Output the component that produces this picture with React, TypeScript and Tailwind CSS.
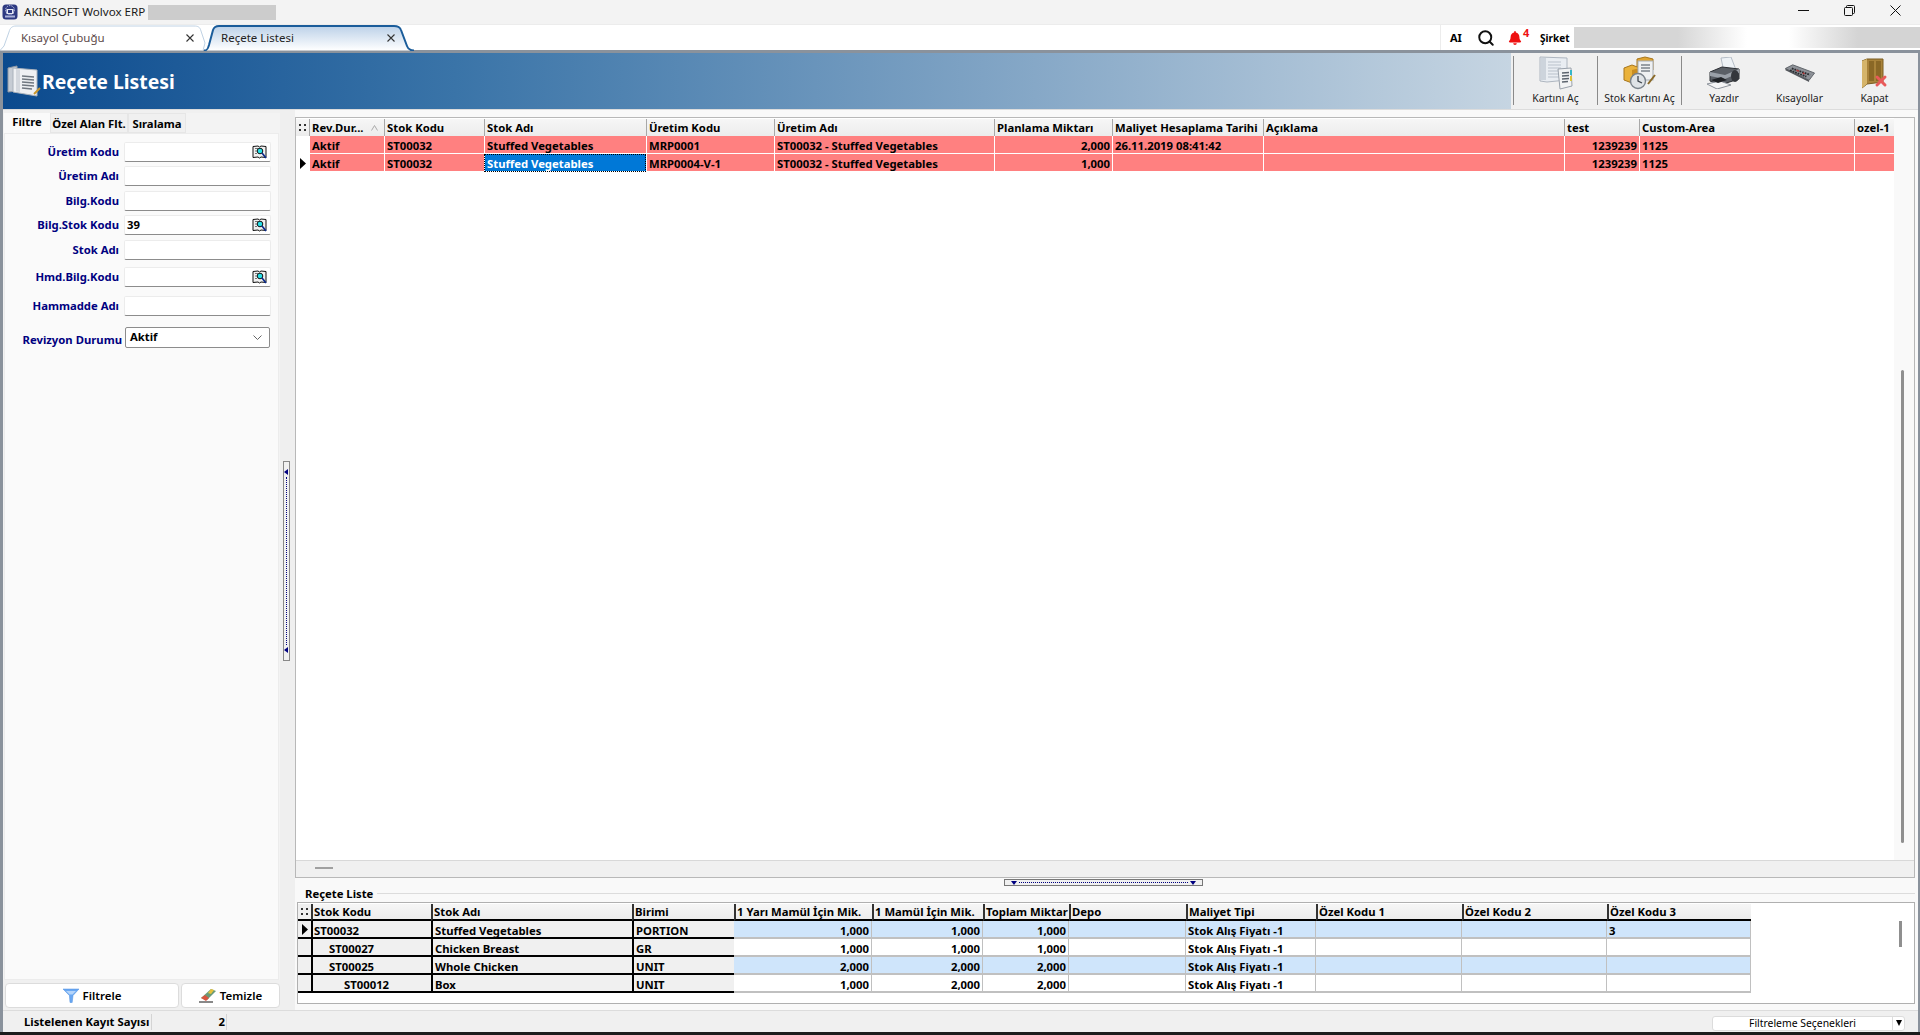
import React from "react";
import { Search } from "lucide-react";
import { FaBell } from "react-icons/fa";

const FONT = "font-['Noto_Sans','Liberation_Sans',sans-serif]";

function BookLens() {
  return (
    <svg width="15" height="14" viewBox="0 0 15 14" className="shrink-0">
      <path d="M1 1.5 L6 1 L7.5 2 L9 1 L14 1.5 L14 12.5 L9 12 L7.5 13 L6 12 L1 12.5Z" fill="#f0f0f0" stroke="#111" strokeWidth="1" />
      <path d="M3 3.5 H6 M3 6 H5 M3 8.5 H5" stroke="#555" strokeWidth="0.8" />
      <circle cx="8" cy="6" r="2.8" fill="#25e0e8" stroke="#111" strokeWidth="1" />
      <line x1="10" y1="8" x2="14" y2="13" stroke="#0a2a8a" strokeWidth="1.7" />
    </svg>
  );
}

function AppIcon() {
  return (
    <svg width="16" height="16" viewBox="0 0 16 16">
      <rect x="0.5" y="0.5" width="15" height="15" rx="3.5" fill="#2e3a82" />
      <circle cx="8" cy="6" r="4.4" fill="none" stroke="#c4cbe8" strokeWidth="1" strokeDasharray="1.4 1" />
      <rect x="4.5" y="5" width="7" height="5" fill="#e6e9f6" />
      <rect x="6" y="6" width="4" height="3" fill="#2e3a82" />
      <rect x="3" y="11.5" width="10" height="2" fill="#aab2da" />
    </svg>
  );
}

function HeaderIcon() {
  return (
    <svg width="34" height="32" viewBox="0 0 34 32">
      <path d="M1 3 L10 1 L10 26 L1 27Z" fill="#c6ccd4" stroke="#8f99a6" />
      <path d="M6 3 L30 5 L30 31 L6 27Z" fill="#eef0f3" stroke="#aab2bc" />
      <path d="M9 4 L13 4.5 L13 27 L9 26.5Z" fill="#d4d8de" />
      <g stroke="#6f7780" strokeWidth="1.6">
        <line x1="15" y1="11" x2="27" y2="12" />
        <line x1="15" y1="14" x2="27" y2="15" />
        <line x1="15" y1="17" x2="27" y2="18" />
        <line x1="15" y1="20" x2="27" y2="21" />
        <line x1="15" y1="23" x2="25" y2="24" />
      </g>
      <line x1="27" y1="29" x2="33" y2="23" stroke="#c7952c" strokeWidth="2" />
    </svg>
  );
}

function CardIcon() {
  return (
    <svg width="34" height="34" viewBox="0 0 34 34">
      <path d="M1 1 L28 2 L28 24 L8 26 L1 25Z" fill="#e9edf2" stroke="#aeb6c0" />
      <rect x="2" y="2" width="5" height="22" fill="#cdd4dc" />
      <g stroke="#b9c1cb">
        <line x1="9" y1="6" x2="22" y2="6" />
        <line x1="9" y1="9" x2="22" y2="9" />
        <line x1="9" y1="12" x2="22" y2="12" />
        <line x1="9" y1="15" x2="22" y2="15" />
        <line x1="9" y1="18" x2="22" y2="18" />
        <line x1="9" y1="21" x2="22" y2="21" />
      </g>
      <path d="M19 13 L32 12 L33 30 L21 33Z" fill="#f2f3f4" stroke="#9aa2ac" />
      <g stroke="#5c646e" strokeWidth="1.3">
        <line x1="23" y1="17" x2="30" y2="16.5" />
        <line x1="23" y1="20" x2="30" y2="19.5" />
        <line x1="23" y1="23" x2="30" y2="22.5" />
        <line x1="23" y1="26" x2="29" y2="25.5" />
      </g>
      <rect x="31" y="14" width="2" height="5" fill="#34b6c8" />
      <rect x="31" y="20" width="2" height="5" fill="#d9c23b" />
    </svg>
  );
}

function StockIcon() {
  return (
    <svg width="34" height="34" viewBox="0 0 34 34">
      <path d="M14 3 L22 1 L30 3 L30 14 L22 16 L14 14Z" fill="#e0a532" stroke="#a8761c" />
      <path d="M1 12 L9 9 L17 12 L17 24 L9 27 L1 24Z" fill="#eab23b" stroke="#a8761c" />
      <path d="M9 14 L17 12 L17 24 L9 27Z" fill="#c98d22" />
      <rect x="15" y="5" width="15" height="19" fill="#eef0f2" stroke="#a6adb5" />
      <g stroke="#6a727b" strokeWidth="1.3">
        <line x1="18" y1="9" x2="27" y2="9" />
        <line x1="18" y1="12" x2="27" y2="12" />
        <line x1="18" y1="15" x2="27" y2="15" />
      </g>
      <circle cx="15" cy="25" r="7.5" fill="#dfe3e7" stroke="#7a828b" strokeWidth="1.4" />
      <path d="M15 20 L15 25 L19 27" fill="none" stroke="#3f464d" strokeWidth="1.3" />
      <line x1="25" y1="28" x2="32" y2="19" stroke="#8a6a2a" strokeWidth="2" />
    </svg>
  );
}

function PrinterIcon() {
  return (
    <svg width="34" height="32" viewBox="0 0 34 32">
      <path d="M14 1 L24 0 L29 13 L17 15Z" fill="#eef2f6" stroke="#b4bcc6" />
      <path d="M3 15 L15 10 L32 12 L32 22 L13 28 L3 24Z" fill="#5a5f66" stroke="#2b2e33" />
      <path d="M3 15 L18 18 L32 12 L32 16 L18 22 L3 19Z" fill="#9aa0a8" />
      <ellipse cx="28" cy="19" rx="4" ry="6" fill="#34373c" />
      <path d="M0 27 L13 24 L24 28 L10 32Z" fill="#f4f5f6" stroke="#8d939b" />
      <path d="M4 23 L14 20 L20 23 L11 26Z" fill="#1f2226" />
    </svg>
  );
}

function KeyboardIcon() {
  return (
    <svg width="32" height="20" viewBox="0 0 34 22">
      <path d="M1 6 L9 2 L33 11 L27 19 Z" fill="#8e9298" stroke="#5b5f65" />
      <path d="M1 6 L27 19 L27 21 L1 8Z" fill="#55585d" />
      <g stroke="#2a2c30" strokeWidth="2" strokeDasharray="2 1">
        <line x1="8" y1="6" x2="28" y2="13" />
        <line x1="6" y1="8" x2="24" y2="15" />
      </g>
      <g stroke="#b63a3a" strokeWidth="1.6">
        <line x1="13" y1="8" x2="16" y2="9" />
        <line x1="20" y1="11" x2="22" y2="12" />
      </g>
    </svg>
  );
}

function DoorIcon() {
  return (
    <svg width="26" height="31" viewBox="0 0 26 31">
      <path d="M0 3 L5 1 L21 1 L21 24 L5 26 L0 30Z" fill="#a9833a" stroke="#7a5c20" />
      <path d="M0 3 L5 1 L5 26 L0 30Z" fill="#d5b46a" />
      <rect x="7" y="3" width="5" height="20" fill="#8a6826" />
      <rect x="14" y="3" width="5" height="20" fill="#8a6826" />
      <g stroke="#e85a5a" strokeWidth="3" strokeLinecap="round">
        <line x1="15" y1="19" x2="23" y2="27" />
        <line x1="23" y1="19" x2="15" y2="27" />
      </g>
    </svg>
  );
}

function FunnelIcon() {
  return (
    <svg width="16" height="15" viewBox="0 0 16 15">
      <path d="M0 1 L16 1 L10 7.5 L9.2 14.5 L7 14.5 L6.4 7.5Z" fill="#6aa8f2" stroke="#4d8fe0" strokeWidth="0.5" />
      <path d="M3 3 L13 3 L9.5 6.5 L6.5 6.5Z" fill="#b4d4fa" />
    </svg>
  );
}

function EraserIcon() {
  return (
    <svg width="18" height="15" viewBox="0 0 18 15">
      <path d="M2 10 L12 1 L17 3 L8 12Z" fill="#6a9a78" />
      <path d="M9 5 L12 1 L15 2 L12 6Z" fill="#e6c23a" />
      <path d="M2 10 L6 7 L10 10 L7 13Z" fill="#d8553f" />
      <line x1="0" y1="14" x2="14" y2="14" stroke="#555" strokeWidth="1.4" />
    </svg>
  );
}

function Tab({ label, active, w }: { label: string; active?: boolean; w: string }) {
  return (
    <div className={`relative h-full ${w} shrink-0 flex items-center justify-between ${active ? "pl-[17px] pr-[20px] text-[#222]" : "pl-[21px] pr-[9px] text-[#5d4a4a]"}`}>
      {active ? (
        <svg width="212" height="26" viewBox="0 0 212 26" className="absolute left-0 top-0">
          <defs>
            <linearGradient id="tabg" x1="0" y1="0" x2="0" y2="1">
              <stop offset="0" stopColor="#bcd1e8" />
              <stop offset="1" stopColor="#ffffff" />
            </linearGradient>
          </defs>
          <path d="M0 25.5 C4 25.5 4 23 5 20 L9 5 C10 2 12 1 15 1 L190 1 C194 1 196 2 197 5 L203 21 C204 24 206 25.5 210 25.5" fill="url(#tabg)" stroke="#1a5c9a" strokeWidth="2" />
        </svg>
      ) : (
        <svg width="210" height="26" viewBox="0 0 210 26" className="absolute left-0 top-0">
          <path d="M0 25.5 L4 21 L9 7 C10 3 12 1 16 1 L194 1 C198 1 200 2 201 6 L205 18 L203 25.5" fill="#ffffff" stroke="#bfd2e4" strokeWidth="1" />
        </svg>
      )}
      <span className="relative text-[11.5px] leading-none">{label}</span>
      <svg width="10" height="10" viewBox="0 0 10 10" className="relative">
        <path d="M1.5 1.5 L8.5 8.5 M8.5 1.5 L1.5 8.5" stroke="#333" strokeWidth="1.1" />
      </svg>
    </div>
  );
}

function ToolButton({ label, icon, w, sep }: { label: string; icon: React.ReactNode; w: string; sep?: boolean }) {
  return (
    <div className={`flex flex-col items-center h-[49px] mt-[3px] ${w} ${sep ? "border-l border-[#8a8a8a]" : ""}`}>
      <div className="h-[34px] flex items-center justify-center">{icon}</div>
      <span className="text-[10.4px] leading-none mt-[3px] text-[#222] whitespace-nowrap">{label}</span>
    </div>
  );
}

const LABEL = "text-right font-bold text-[11.3px] leading-none text-[#000080] whitespace-nowrap";

function Field({ label, value, lens, mt }: { label: string; value?: string; lens?: boolean; mt: string }) {
  return (
    <div className={`flex items-center ${mt}`}>
      <div className={`w-[114px] ${LABEL}`}>{label}</div>
      <div className="ml-[5px] w-[147px] h-[20px] bg-white border border-[#ececec] border-b-[#8c8c8c] rounded-[2px] flex items-center justify-between pl-[2px] pr-[3px]">
        <span className="font-bold text-[11.3px] leading-none text-black">{value}</span>
        {lens ? <BookLens /> : null}
      </div>
    </div>
  );
}

const MAIN_ROW = "grid grid-cols-[13px_75px_100px_162px_128px_220px_118px_151px_301px_75px_215px_40px]";
const mainHead = ["Rev.Dur...", "Stok Kodu", "Stok Adı", "Üretim Kodu", "Üretim Adı", "Planlama Miktarı", "Maliyet Hesaplama Tarihi", "Açıklama", "test", "Custom-Area", "ozel-1"];
const mainRows = [
  ["Aktif", "ST00032", "Stuffed Vegetables", "MRP0001", "ST00032 - Stuffed Vegetables", "2,000", "26.11.2019 08:41:42", "", "1239239", "1125", ""],
  ["Aktif", "ST00032", "Stuffed Vegetables", "MRP0004-V-1", "ST00032 - Stuffed Vegetables", "1,000", "", "", "1239239", "1125", ""],
];
const mainRight = [5, 8];

const SUB_ROW = "grid grid-cols-[13px_120px_201px_102px_138px_111px_86px_117px_130px_146px_145px_144px]";
const subHead = ["Stok Kodu", "Stok Adı", "Birimi", "1 Yarı Mamül İçin Mik.", "1 Mamül İçin Mik.", "Toplam Miktar", "Depo", "Maliyet Tipi", "Özel Kodu 1", "Özel Kodu 2", "Özel Kodu 3"];
const subRows = [
  { ind: "pl-[1px]", c: ["ST00032", "Stuffed Vegetables", "PORTION", "1,000", "1,000", "1,000", "", "Stok Alış Fiyatı -1", "", "", "3"] },
  { ind: "pl-[16px]", c: ["ST00027", "Chicken Breast", "GR", "1,000", "1,000", "1,000", "", "Stok Alış Fiyatı -1", "", "", ""] },
  { ind: "pl-[16px]", c: ["ST00025", "Whole Chicken", "UNIT", "2,000", "2,000", "2,000", "", "Stok Alış Fiyatı -1", "", "", ""] },
  { ind: "pl-[31px]", c: ["ST00012", "Box", "UNIT", "1,000", "2,000", "2,000", "", "Stok Alış Fiyatı -1", "", "", ""] },
];

function Arrow() {
  return (
    <svg width="6" height="11" viewBox="0 0 6 11">
      <path d="M0 0 L6 5.5 L0 11Z" fill="#000" />
    </svg>
  );
}

function Dots() {
  return (
    <svg width="7" height="7" viewBox="0 0 7 7">
      <rect x="0" y="0" width="2" height="2" fill="#333" />
      <rect x="5" y="0" width="2" height="2" fill="#333" />
      <rect x="0" y="5" width="2" height="2" fill="#333" />
      <rect x="5" y="5" width="2" height="2" fill="#333" />
    </svg>
  );
}

export default function App() {
  return (
    <div className={`w-[1920px] h-[1035px] overflow-hidden flex flex-col bg-[#f0f0f0] text-black ${FONT}`}>
      {/* title bar */}
      <div className="h-[24px] shrink-0 bg-[#f3f3f3] flex items-center">
        <div className="ml-[2px] w-[16px] h-[16px] flex"><AppIcon /></div>
        <span className="ml-[6px] text-[11.6px] leading-none text-[#1a1a1a]">AKINSOFT Wolvox ERP</span>
        <div className="ml-[3px] w-[128px] h-[15px] bg-[#cccccc]" />
        <div className="ml-auto flex items-center pb-[4px]">
          <div className="w-[46px] flex justify-center">
            <svg width="11" height="11" viewBox="0 0 11 11"><line x1="0" y1="5.5" x2="11" y2="5.5" stroke="#111" /></svg>
          </div>
          <div className="w-[46px] flex justify-center">
            <svg width="11" height="11" viewBox="0 0 11 11" fill="none" stroke="#111"><rect x="0.5" y="2.5" width="8" height="8" rx="1" /><path d="M2.5 2.5 V1.5 a1 1 0 0 1 1-1 h6 a1 1 0 0 1 1 1 v6 a1 1 0 0 1-1 1 h-1" /></svg>
          </div>
          <div className="w-[46px] flex justify-center mr-[2px]">
            <svg width="11" height="11" viewBox="0 0 11 11"><path d="M0.5 0.5 L10.5 10.5 M10.5 0.5 L0.5 10.5" stroke="#111" /></svg>
          </div>
        </div>
      </div>

      {/* tabs */}
      <div className="h-[26px] shrink-0 bg-white border-t border-[#ececec] flex items-stretch">
        <Tab label="Kısayol Çubuğu" w="w-[204px]" />
        <Tab label="Reçete Listesi" active w="w-[212px]" />
        <div className="ml-auto w-[480px] border-l border-[#ececec] flex items-center">
          <span className="ml-[9px] font-bold text-[11px] leading-none w-[27px]">AI</span>
          <Search size={18} strokeWidth={2.6} color="#111" />
          <div className="relative ml-[13px] w-[30px] h-[22px] flex items-center">
            <FaBell size={14} color="#ee1111" />
            <span className="absolute left-[15px] top-[0px] text-[11px] font-bold leading-none text-[#ee1111]">4</span>
          </div>
          <span className="ml-[2px] font-bold text-[10px] leading-none w-[34px]">Şirket</span>
          <div className="flex-1 h-[21px] bg-[linear-gradient(90deg,#d6d6d6_0%,#d6d6d6_30%,#ffffff_50%,#ffffff_62%,#d4d4d4_82%,#d4d4d4_100%)]" />
        </div>
      </div>

      {/* window */}
      <div className="flex-1 min-h-0 flex flex-col border-l-[3px] border-r-[2px] border-t-[3px] border-[#8a929c]">
        {/* header */}
        <div className="h-[56px] shrink-0 flex">
          <div className="w-[1508px] bg-[linear-gradient(90deg,#0b4a8e_0%,#3a74a8_30%,#7fa3c4_65%,#c6d5e2_100%)] flex items-center pl-[4px]">
            <HeaderIcon />
            <span className="ml-[1px] pt-[2px] text-white font-bold text-[19.4px] leading-none">Reçete Listesi</span>
          </div>
          <div className="flex-1 bg-[#f0f0f0] flex pl-[2px]">
            <ToolButton label="Kartını Aç" icon={<CardIcon />} w="w-[84px]" sep />
            <ToolButton label="Stok Kartını Aç" icon={<StockIcon />} w="w-[84px]" sep />
            <ToolButton label="Yazdır" icon={<PrinterIcon />} w="w-[85px]" sep />
            <ToolButton label="Kısayollar" icon={<KeyboardIcon />} w="w-[67px]" />
            <ToolButton label="Kapat" icon={<DoorIcon />} w="w-[83px]" />
          </div>
        </div>

        {/* main */}
        <div className="flex-1 min-h-0 flex border-t border-[#dcdcdc]">
          {/* left */}
          <div className="w-[277px] shrink-0 flex flex-col bg-[#f3f3f3]">
            <div className="h-[3px] bg-[#f0f0f0]" />
            <div className="h-[20px] flex pl-[1px] items-stretch">
              <div className="w-[46px] bg-[#fafafa] font-bold text-[11.3px] leading-none flex items-center justify-center pb-[3px]">Filtre</div>
              <div className="w-[78px] bg-[#f0f0f0] border border-[#e6e6e6] font-bold text-[11.3px] leading-none flex items-center justify-center pt-[1px] whitespace-nowrap">Özel Alan Flt.</div>
              <div className="w-[58px] bg-[#f0f0f0] border border-[#e6e6e6] font-bold text-[11.3px] leading-none flex items-center justify-center pt-[1px]">Sıralama</div>
            </div>
            <div className="flex-1 min-h-0 ml-[1px] mr-[1px] bg-[#fafafa] border border-[#ececec] flex flex-col">
              <Field label="Üretim Kodu" lens mt="mt-[8px]" />
              <Field label="Üretim Adı" mt="mt-[4px]" />
              <Field label="Bilg.Kodu" mt="mt-[5px]" />
              <Field label="Bilg.Stok Kodu" value="39" lens mt="mt-[4px]" />
              <Field label="Stok Adı" mt="mt-[5px]" />
              <Field label="Hmd.Bilg.Kodu" lens mt="mt-[7px]" />
              <Field label="Hammadde Adı" mt="mt-[9px]" />
              <div className="flex items-center mt-[11px]">
                <div className={`w-[117px] pt-[4px] ${LABEL}`}>Revizyon Durumu</div>
                <div className="ml-[3px] w-[145px] h-[21px] bg-white border border-[#8c8c8c] rounded-[2px] flex items-center justify-between pl-[4px] pr-[7px]">
                  <span className="font-bold text-[11.3px] leading-none pb-[2px]">Aktif</span>
                  <svg width="9" height="5" viewBox="0 0 9 5"><path d="M0.5 0.5 L4.5 4.5 L8.5 0.5" fill="none" stroke="#666" /></svg>
                </div>
              </div>
            </div>
            <div className="h-[30px] shrink-0 flex items-end gap-[2px] pl-[2px] pb-[2px] bg-[#f0f0f0]">
              <div className="w-[174px] h-[25px] bg-white border border-[#dcdcdc] rounded-[4px] flex items-center justify-center gap-[4px] text-[11.5px] font-semibold leading-none"><FunnelIcon />Filtrele</div>
              <div className="w-[99px] h-[25px] bg-white border border-[#dcdcdc] rounded-[4px] flex items-center justify-center gap-[3px] text-[11.5px] font-semibold leading-none"><EraserIcon />Temizle</div>
            </div>
          </div>

          {/* splitter */}
          <div className="w-[15px] shrink-0 bg-[#efefef] flex items-start justify-center pr-[3px] pt-[351px]">
            <div className="w-[7px] h-[200px] border border-[#888] flex flex-col items-center justify-between py-[7px] bg-[#f0f0f0]">
              <svg width="4" height="6" viewBox="0 0 4 6"><path d="M4 0 L0 3 L4 6Z" fill="#000080" /></svg>
              <div className="flex-1 border-l border-dotted border-[#000080] my-[2px]" />
              <svg width="4" height="6" viewBox="0 0 4 6"><path d="M4 0 L0 3 L4 6Z" fill="#000080" /></svg>
            </div>
          </div>

          {/* right */}
          <div className="flex-1 min-w-0 flex flex-col bg-[#f9f9f9] pr-[3px]">
            <div className="mt-[7px] h-[761px] shrink-0 border border-[#b8b8b8] bg-white flex flex-col">
              <div className="flex-1 min-h-0 flex">
                <div className="w-[1598px] shrink-0 bg-white pt-[1px]">
                  <div className={`${MAIN_ROW} h-[17px] bg-[linear-gradient(180deg,#f6f6f6,#ececec)]`}>
                    <div className="flex items-center justify-center"><Dots /></div>
                    {mainHead.map((h, i) => (
                      <div key={h} className="border-l border-[#a8a8a8] pl-[2px] flex items-center justify-between pr-[6px] font-bold text-[11.3px] leading-none whitespace-nowrap overflow-hidden">
                        {h}
                        {i === 0 ? (
                          <svg width="7" height="6" viewBox="0 0 7 6" className="shrink-0"><path d="M0.5 5.5 L3.5 0.5 L6.5 5.5" fill="none" stroke="#aaa" /></svg>
                        ) : null}
                      </div>
                    ))}
                  </div>
                  {mainRows.map((r, ri) => (
                    <div key={ri} className={`${MAIN_ROW} h-[18px]`}>
                      <div className="flex items-center justify-center">{ri === 1 ? <Arrow /> : null}</div>
                      {r.map((c, ci) => {
                        const sel = ri === 1 && ci === 2;
                        return (
                          <div key={ci} className={`border-l border-b border-white flex items-center px-[2px] pt-[2px] font-bold text-[11.3px] leading-none whitespace-nowrap overflow-hidden ${mainRight.includes(ci) ? "justify-end" : ""} ${sel ? "bg-[#0078d7] text-white outline-1 -outline-offset-1 outline-dotted outline-black" : "bg-[#ff8080] text-black"}`}>
                            {c}
                          </div>
                        );
                      })}
                    </div>
                  ))}
                </div>
                <div className="flex-1 bg-[#f9f9f9] flex justify-start pl-[7px] pt-[252px]">
                  <div className="w-[3px] h-[473px] bg-[#8f8f8f] rounded-[2px]" />
                </div>
              </div>
              <div className="h-[17px] shrink-0 bg-[#f0f0f0] border-t border-[#d8d8d8] pl-[19px] pb-[2px] flex items-center">
                <div className="w-[18px] h-[2px] bg-[#a0a0a0]" />
              </div>
            </div>

            {/* horizontal splitter */}
            <div className="h-[8px] shrink-0 pt-[1px] pl-[709px]">
              <div className="w-[199px] h-[7px] border border-[#777] bg-[#f0f0f0] flex items-center justify-between px-[6px]">
                <svg width="6" height="4" viewBox="0 0 6 4"><path d="M0 0 L6 0 L3 4Z" fill="#000080" /></svg>
                <div className="flex-1 border-t border-dotted border-[#000080] mx-[2px]" />
                <svg width="6" height="4" viewBox="0 0 6 4"><path d="M0 0 L6 0 L3 4Z" fill="#000080" /></svg>
              </div>
            </div>

            {/* group */}
            <div className="flex-1 min-h-0 flex flex-col">
              <div className="h-[16px] shrink-0 flex items-center pl-[10px] pb-[1px]">
                <span className="font-bold text-[11.3px] leading-none pr-[4px]">Reçete Liste</span>
                <div className="flex-1 h-px bg-[#dcdcdc]" />
              </div>
              <div className="h-[102px] shrink-0 ml-[2px] border border-[#b0b0b0] bg-white pt-[1px] flex">
                <div className="w-[1453px] shrink-0">
                  <div className={`${SUB_ROW} h-[17px]`}>
                    <div className="bg-[#f0f0f0] border-b-2 border-black flex items-center justify-center"><Dots /></div>
                    {subHead.map((h) => (
                      <div key={h} className="bg-[linear-gradient(180deg,#f6f6f6,#ececec)] border-l-2 border-b-2 border-l-[#333] border-b-black pl-[1px] pt-[1px] flex items-center font-bold text-[11.3px] leading-none whitespace-nowrap overflow-hidden">{h}</div>
                    ))}
                  </div>
                  {subRows.map((r, ri) => (
                    <div key={ri} className={`${SUB_ROW} h-[18px]`}>
                      <div className="bg-[#f0f0f0] border-b-2 border-black flex items-center justify-center">{ri === 0 ? <Arrow /> : null}</div>
                      {r.c.map((c, ci) => {
                        const fixed = ci < 3;
                        const right = ci >= 3 && ci <= 5;
                        const cls = fixed
                          ? "bg-[#f0f0f0] border-l-2 border-b-2 border-l-black border-b-black"
                          : `border-r border-b-2 border-r-[#c0c0c0] border-b-[#c0c0c0] ${ri % 2 === 0 ? "bg-[#cfe5fb]" : "bg-white"}`;
                        return (
                          <div key={ci} className={`flex items-center pt-[4px] font-bold text-[11.3px] leading-none whitespace-nowrap overflow-hidden ${cls} ${ci === 0 ? r.ind : "px-[2px]"} ${right ? "justify-end" : ""}`}>
                            {c}
                          </div>
                        );
                      })}
                    </div>
                  ))}
                </div>
                <div className="flex-1 flex justify-end pr-[12px] pt-[17px]">
                  <div className="w-[3px] h-[26px] bg-[#8f8f8f]" />
                </div>
              </div>
            </div>
          </div>
        </div>

        {/* status */}
        <div className="h-[22px] shrink-0 bg-[#f0f0f0] border-t border-[#dcdcdc] flex items-center">
          <div className="w-[149px] pl-[21px] font-bold text-[11.3px] leading-none border-r border-[#d4d4d4] h-[16px] flex items-center whitespace-nowrap">Listelenen Kayıt Sayısı</div>
          <div className="w-[75px] text-right pr-[1px] font-bold text-[11.3px] leading-none border-r border-[#d4d4d4] h-[16px] flex items-center justify-end">2</div>
          <div className="ml-auto mr-[13px] mt-[3px] w-[193px] h-[15px] bg-white border border-[#dcdcdc] rounded-[3px] flex items-center">
            <span className="flex-1 text-center text-[10.4px] leading-none">Filtreleme Seçenekleri</span>
            <div className="w-[12px] h-full border-l border-[#dcdcdc] flex items-center justify-center">
              <svg width="6" height="6" viewBox="0 0 6 6"><path d="M0 0 L6 0 L3 6Z" fill="#000" /></svg>
            </div>
          </div>
        </div>
      </div>
      <div className="h-[3px] shrink-0 bg-[#1c1c1c]" />
    </div>
  );
}
